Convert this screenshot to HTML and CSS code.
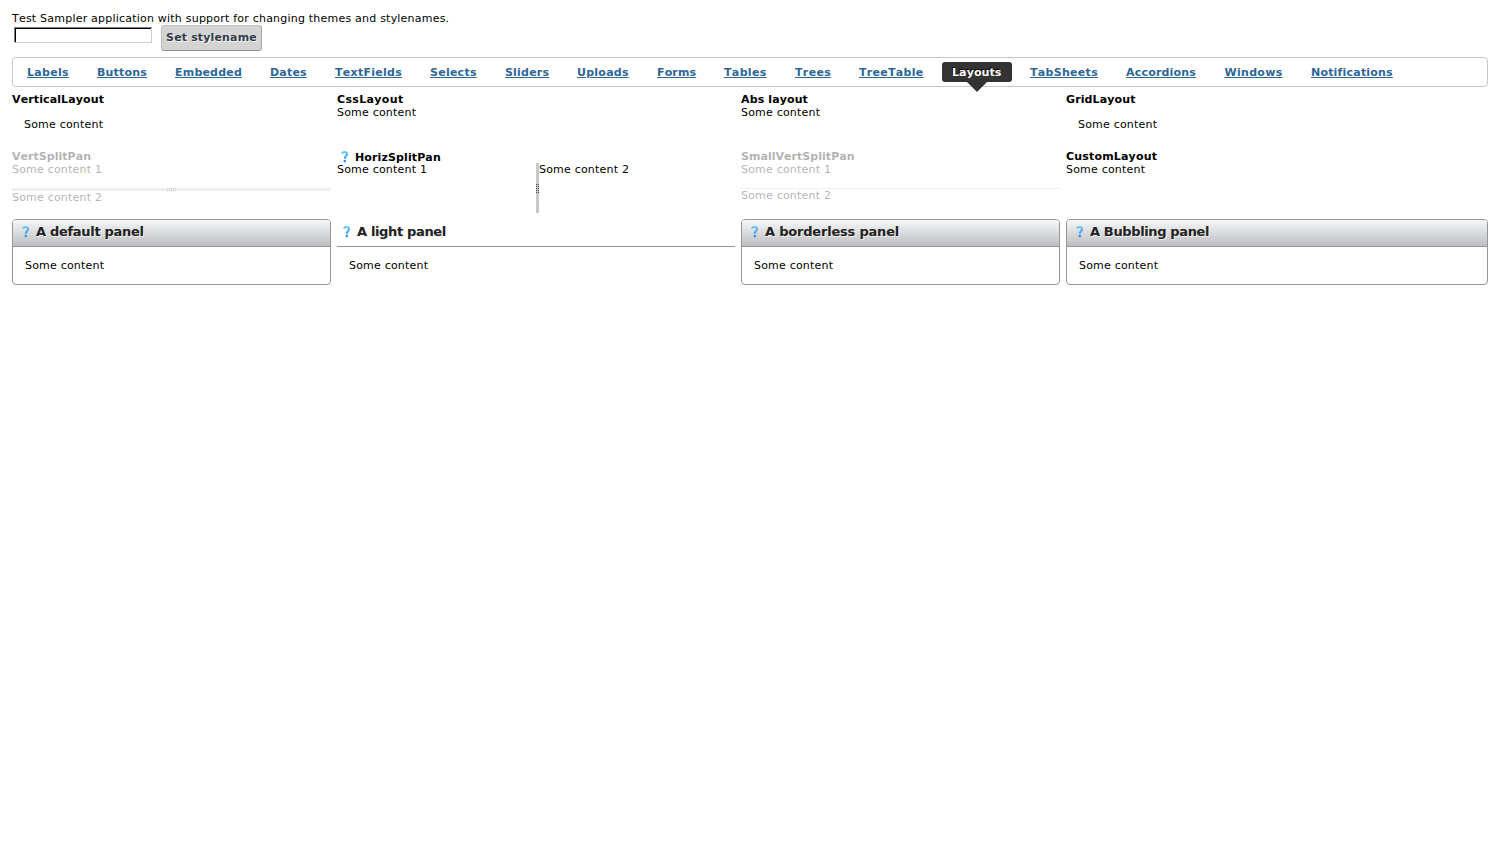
FILE: index.html
```html
<!DOCTYPE html>
<html lang="en">
<head>
<meta charset="utf-8">
<title>Test Sampler</title>
<link rel="stylesheet" href="styles.css">
</head>
<body>
<svg class="defs" aria-hidden="true">
  <defs>
    <linearGradient id="blue" x1="0" y1="0" x2="0" y2="16" gradientUnits="userSpaceOnUse">
      <stop offset="0.15" stop-color="#6dcbf8"/>
      <stop offset="0.85" stop-color="#1e86f0"/>
    </linearGradient>
    <symbol id="help" viewBox="0 0 16 16">
      <path d="M5 4.600C5.300 3.300 6.400 3 7.600 3c1.600 0 2.500.8 2.500 2 0 2-2.300 2.200-2.300 4.700" fill="none" stroke="url(#blue)" stroke-width="2.100"/>
      <circle cx="7.800" cy="12.100" r="1.300" fill="#2a91f5"/>
    </symbol>
  </defs>
</svg>
<div class="intro">Test Sampler application with support for changing themes and stylenames.</div>
<div class="toolbar">
  <input class="field" type="text" aria-label="Stylename">
  <button class="button">Set stylename</button>
</div>
<nav class="tabs">
  <a class="tab">Labels</a>
  <a class="tab">Buttons</a>
  <a class="tab">Embedded</a>
  <a class="tab">Dates</a>
  <a class="tab">TextFields</a>
  <a class="tab">Selects</a>
  <a class="tab">Sliders</a>
  <a class="tab">Uploads</a>
  <a class="tab">Forms</a>
  <a class="tab">Tables</a>
  <a class="tab">Trees</a>
  <a class="tab">TreeTable</a>
  <a class="tab selected">Layouts</a>
  <a class="tab">TabSheets</a>
  <a class="tab">Accordions</a>
  <a class="tab">Windows</a>
  <a class="tab">Notifications</a>
</nav>
<main class="grid">
  <section><div class="caption">VerticalLayout</div><div class="inset">Some content</div></section>
  <section><div class="caption wide">CssLayout</div><div>Some content</div></section>
  <section><div class="caption">Abs layout</div><div>Some content</div></section>
  <section><div class="caption">GridLayout</div><div class="inset">Some content</div></section>

  <section class="disabled">
    <div class="caption tight">VertSplitPan</div>
    <div class="vsplit">
      <div class="first">Some content 1</div>
      <div class="vbar"><span class="grip"></span></div>
      <div>Some content 2</div>
    </div>
  </section>
  <section>
    <div class="caption with-icon"><svg class="icon"><use href="#help"/></svg><span>HorizSplitPan</span></div>
    <div class="hsplit">
      <div class="left">Some content 1</div>
      <div class="hbar"><span class="grip"></span></div>
      <div>Some content 2</div>
    </div>
  </section>
  <section class="disabled">
    <div class="caption tight">SmallVertSplitPan</div>
    <div class="vsplit">
      <div class="first">Some content 1</div>
      <div class="vbar small"></div>
      <div>Some content 2</div>
    </div>
  </section>
  <section><div class="caption custom">CustomLayout</div><div>Some content</div></section>

  <section class="panel">
    <h2 class="head"><svg class="icon"><use href="#help"/></svg><span>A default panel</span></h2>
    <div class="body">Some content</div>
  </section>
  <section class="panel light">
    <h2 class="head"><svg class="icon"><use href="#help"/></svg><span>A light panel</span></h2>
    <div class="body">Some content</div>
  </section>
  <section class="panel borderless">
    <h2 class="head"><svg class="icon"><use href="#help"/></svg><span>A borderless panel</span></h2>
    <div class="body">Some content</div>
  </section>
  <section class="panel bubble">
    <h2 class="head"><svg class="icon"><use href="#help"/></svg><span>A Bubbling panel</span></h2>
    <div class="body">Some content</div>
  </section>
</main>
</body>
</html>
```
FILE: styles.css
```css
* { box-sizing: border-box; }
body {
  margin: 0;
  padding: 12px;
  background: #fff;
  color: #000;
  font: 11px/13px "DejaVu Sans", sans-serif;
  font-kerning: none;
  letter-spacing: 0.2px;
}
.defs { position: absolute; width: 0; height: 0; }
.intro { height: 13px; letter-spacing: 0.215px; }
.toolbar { display: flex; align-items: flex-start; height: 26px; }
.field {
  width: 138px;
  height: 16px;
  margin: 2px 9px 0 2px;
  padding: 0;
  border: 1px solid;
  border-color: #808080 #d4d0c8 #d4d0c8 #808080;
  box-shadow: inset 1px 1px 0 #000;
  background: #fff;
  font: inherit;
}
.button {
  width: 101px;
  height: 26px;
  padding: 0 0 2px;
  border: 1px solid;
  border-color: #c2c2c2 #a6a6a6 #929292 #bbb;
  border-radius: 3px;
  background: #d4d4d4;
  color: #323c4b;
  font: bold 11px/13px "DejaVu Sans", sans-serif;
  letter-spacing: 0.15px;
  text-shadow: 1px 1px 0 #f4f4f4;
  white-space: nowrap;
}
.tabs {
  display: flex;
  align-items: center;
  gap: 8px;
  height: 30px;
  margin: 6px 0;
  padding-left: 4px;
  border: 1px solid #c8c8c8;
  border-radius: 4px;
}
.tab {
  position: relative;
  flex: none;
  height: 20px;
  padding-left: 10px;
  color: #2e6696;
  font-weight: bold;
  line-height: 21px;
  text-decoration: underline;
}
.tab:nth-child(1) { width: 62px; letter-spacing: 0.3px; }
.tab:nth-child(2) { width: 70px; }
.tab:nth-child(3) { width: 87px; }
.tab:nth-child(4) { width: 57px; }
.tab:nth-child(5) { width: 87px; letter-spacing: 0.28px; }
.tab:nth-child(6) { width: 67px; letter-spacing: 0.25px; }
.tab:nth-child(7) { width: 64px; }
.tab:nth-child(8) { width: 72px; letter-spacing: 0.25px; }
.tab:nth-child(9) { width: 59px; letter-spacing: 0.15px; }
.tab:nth-child(10) { width: 63px; letter-spacing: 0.35px; }
.tab:nth-child(11) { width: 56px; letter-spacing: 0.35px; }
.tab:nth-child(12) { width: 85px; letter-spacing: 0.3px; }
.tab:nth-child(13) { width: 70px; letter-spacing: 0.1px; }
.tab:nth-child(14) { width: 88px; letter-spacing: 0.3px; }
.tab:nth-child(15) { width: 90.5px; }
.tab:nth-child(16) { width: 78.5px; letter-spacing: 0.3px; }
.selected {
  border-radius: 3px;
  background: #333;
  color: #fff;
  text-decoration: none;
  text-shadow: -1px -1px 0 #000;
}
.selected::after {
  content: "";
  position: absolute;
  top: 20px;
  left: 50%;
  margin-left: -10px;
  border: 10px solid transparent;
  border-top-color: #333;
  border-bottom: 0;
}
.grid {
  display: grid;
  grid-template-columns: 319px 398px 319px 422px;
  grid-template-rows: 51px 63px 66px;
  gap: 6px;
}
.caption { height: 13px; font-weight: bold; letter-spacing: 0.12px; }
.caption.wide { letter-spacing: 0.35px; }
.caption.tight { letter-spacing: 0.04px; }
.caption.custom { letter-spacing: 0.18px; }
.with-icon { display: flex; align-items: flex-start; gap: 2px; }
.with-icon span { padding-top: 1px; }
.icon { width: 16px; height: 16px; flex: none; }
.with-icon .icon { margin-top: -1px; }
.inset { padding: 12px; }
.disabled { opacity: 0.3; }
.vsplit { height: 50px; }
.first { height: 25px; }
.vbar {
  display: flex;
  justify-content: center;
  align-items: center;
  height: 3px;
  background: #c8c8c8;
}
.vbar.small { height: 1px; }
.hsplit { display: flex; height: 50px; }
.left { width: 199px; }
.hbar {
  display: flex;
  align-items: center;
  width: 3px;
  background: #c8c8c8;
}
.grip {
  width: 3px;
  height: 9px;
  background:
    linear-gradient(90deg, transparent 1px, #c8c8c8 1px 2px, transparent 2px),
    repeating-linear-gradient(#444 0 1px, transparent 1px 2px);
}
.vbar .grip {
  width: 9px;
  height: 3px;
  background:
    linear-gradient(transparent 1px, #c8c8c8 1px 2px, transparent 2px),
    repeating-linear-gradient(90deg, #444 0 1px, transparent 1px 2px);
}
.panel { border: 1px solid #949698; border-radius: 4px; overflow: hidden; }
.head {
  display: flex;
  align-items: center;
  gap: 2px;
  height: 27px;
  margin: 0;
  padding: 0 5px 2px;
  border-bottom: 1px solid #949698;
  background: linear-gradient(#f6f7f7, #bcbec2);
  color: #222;
  font-size: 13px;
  line-height: 16px;
  letter-spacing: -0.3px;
  text-shadow: 1px 1px 0 #eee;
}
.body { padding: 12px; }
.light { border: 0; border-radius: 0; padding-top: 1px; }
.light .head { padding-left: 2px; background: none; letter-spacing: -0.35px; }
.borderless .head { letter-spacing: -0.2px; }
.bubble .head { letter-spacing: -0.37px; }
```
